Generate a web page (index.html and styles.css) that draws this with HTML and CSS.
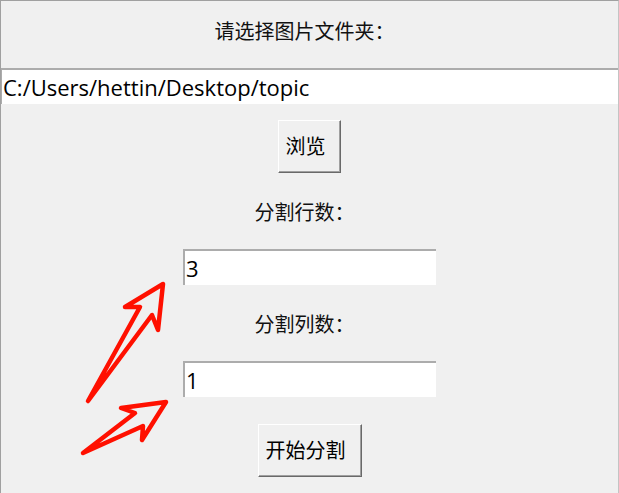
FILE: index.html
```html
<!DOCTYPE html>
<html lang="zh">
<head>
<meta charset="utf-8">
<title>图片分割</title>
<link rel="stylesheet" href="styles.css">
</head>
<body>
<div class="window">
  <div class="label label-title">请选择图片文件夹：</div>
  <div class="entry entry-wide">C:/Users/hettin/Desktop/topic</div>
  <div class="button button-browse">浏览</div>
  <div class="label label-mid">分割行数：</div>
  <div class="entry entry-small">3</div>
  <div class="label label-mid">分割列数：</div>
  <div class="entry entry-small">1</div>
  <div class="button button-start">开始分割</div>

  <svg class="arrows" width="619" height="493" viewBox="0 0 619 493">
    <polygon points="88,401 140,307 125,307 163,284 158,330 152,315" />
    <polygon points="83,453 135,413 121,408 166,402 142,440 143,426" />
  </svg>
</div>
</body>
</html>
```

FILE: styles.css
```css
html, body {
  margin: 0;
  padding: 0;
  background: #f0f0f0;
}

body {
  font-family: "Noto Sans CJK SC", "Open Sans", sans-serif;
  font-size: 20px;
  font-weight: 400;
  color: #000;
}

.window {
  position: relative;
  width: 619px;
  height: 493px;
  box-sizing: border-box;
  border-top: 1px solid #a0a0a0;
  border-left: 1px solid #a0a0a0;
  border-right: 1px solid #c4c4c4;
  display: flex;
  flex-direction: column;
  align-items: center;
  overflow: hidden;
}

.label {
  display: flex;
  align-items: center;
  justify-content: center;
  white-space: nowrap;
  padding-right: 10px;
  color: #111;
}

.label-title {
  height: 67px;
  padding-bottom: 8px;
  box-sizing: border-box;
}

.label-mid {
  height: 76px;
}

.entry {
  box-sizing: border-box;
  height: 36px;
  background: #fff;
  border-top: 2px solid #acacac;
  border-left: 2px solid #acacac;
  display: flex;
  align-items: center;
  padding-left: 1px;
  font-family: "Open Sans", "Noto Sans CJK SC", sans-serif;
  font-size: 22px;
  font-weight: 400;
  white-space: nowrap;
}

.entry-wide {
  align-self: stretch;
  margin-left: -1px;
}

.entry-small {
  width: 253px;
}

.button {
  box-sizing: border-box;
  height: 53px;
  display: flex;
  align-items: center;
  justify-content: center;
  background: #f0f0f0;
  border-top: 1px solid #ffffff;
  border-left: 1px solid #ffffff;
  border-right: 1px solid #696969;
  border-bottom: 1px solid #696969;
  box-shadow: inset -1px -1px 0 #a0a0a0;
  white-space: nowrap;
  padding-right: 8px;
}

.button-browse {
  width: 63px;
  margin-top: 16px;
  padding-bottom: 2px;
}

.button-start {
  width: 104px;
  margin-top: 27px;
  padding-bottom: 2px;
}

.arrows {
  position: absolute;
  left: -1px;
  top: -1px;
  pointer-events: none;
}

.arrows polygon {
  fill: none;
  stroke: #ff1000;
  stroke-width: 4.5;
  stroke-linejoin: round;
  stroke-linecap: round;
}
```
